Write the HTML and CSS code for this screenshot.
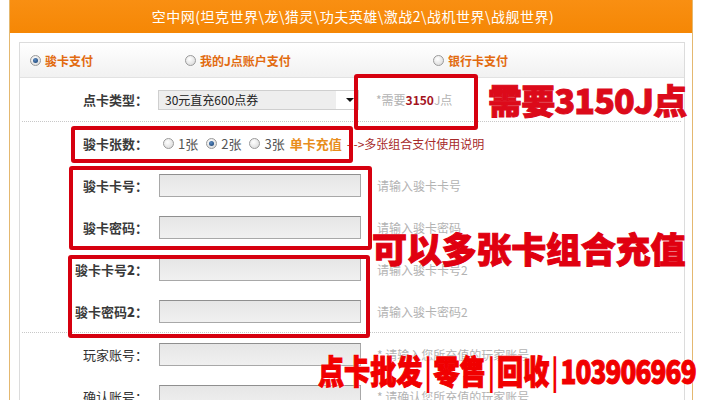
FILE: index.html
```html
<!DOCTYPE html>
<html lang="zh-CN">
<head>
<meta charset="utf-8">
<title>空中网充值</title>
<link rel="stylesheet" href="styles.css">
</head>
<body>
<div class="wrap">
  <div class="head">空中网(坦克世界\龙\猎灵\功夫英雄\激战2\战机世界\战舰世界)</div>
  <div class="main">
    <div class="panel">
      <div class="tabs">
        <div class="tab tab1"><span class="radio on"></span>骏卡支付</div>
        <div class="tab tab2"><span class="radio"></span>我的J点账户支付</div>
        <div class="tab tab3"><span class="radio"></span>银行卡支付</div>
      </div>
      <div class="row row-first sep">
        <div class="lbl">点卡类型：</div>
        <div class="select"><span class="sel-text">30元直充600点券</span><span class="sel-btn"><i class="arrow"></i></span></div>
        <div class="hint">*需要<b class="need">3150</b>J点</div>
      </div>
      <div class="row">
        <div class="lbl">骏卡张数：</div>
        <div class="counts">
          <span class="opt"><span class="radio"></span>1张</span>
          <span class="opt"><span class="radio on"></span>2张</span>
          <span class="opt"><span class="radio"></span>3张</span>
          <span class="single">单卡充值</span>
          <span class="help">- ->多张组合支付使用说明</span>
        </div>
      </div>
      <div class="row">
        <div class="lbl">骏卡卡号：</div>
        <div class="input"></div>
        <div class="hint">请输入骏卡卡号</div>
      </div>
      <div class="row">
        <div class="lbl">骏卡密码：</div>
        <div class="input"></div>
        <div class="hint">请输入骏卡密码</div>
      </div>
      <div class="row">
        <div class="lbl">骏卡卡号<b>2</b>：</div>
        <div class="input"></div>
        <div class="hint">请输入骏卡卡号2</div>
      </div>
      <div class="row sep">
        <div class="lbl">骏卡密码<b>2</b>：</div>
        <div class="input"></div>
        <div class="hint">请输入骏卡密码2</div>
      </div>
      <div class="row">
        <div class="lbl lbl-light">玩家账号：</div>
        <div class="input"></div>
        <div class="hint">* 请输入您所充值的玩家账号</div>
      </div>
      <div class="row">
        <div class="lbl lbl-light">确认账号：</div>
        <div class="input"></div>
        <div class="hint">* 请确认您所充值的玩家账号</div>
      </div>
    </div>
  </div>
</div>

<div class="mark mark1"></div>
<div class="mark mark2"></div>
<div class="mark mark3"></div>
<div class="mark mark4"></div>

<div class="big big1">需要3150J点</div>
<div class="big big2">可以多张卡组合充值</div>
<div class="big big3"><span class="squeeze">点卡批发<span class="bar">|</span>零售<span class="bar">|</span>回收<span class="bar">|</span><span class="num">103906969</span></span></div>
</body>
</html>
```

FILE: styles.css
```css
html, body {
  margin: 0;
  padding: 0;
  background: #fff;
}
body {
  position: relative;
  width: 705px;
  height: 400px;
  overflow: hidden;
  font-family: "Noto Sans CJK SC", "Noto Sans", sans-serif;
  font-size: 13px;
  color: #333;
}
.wrap {
  margin-left: 9px;
  width: 682px;
  border-left: 1px solid #e4b870;
  border-right: 1px solid #e4b870;
  height: 440px;
}
.head {
  height: 33px;
  line-height: 32px;
  background: linear-gradient(#f98f12, #f58705);
  color: #fff;
  text-align: center;
  font-size: 14px;
  letter-spacing: 0.5px;
  padding-left: 4px;
}
.main {
  padding: 9px 7px 0 9px;
}
.panel {
  border: 1px solid #dcdcdc;
  height: 420px;
}
.tabs {
  display: flex;
  align-items: center;
  height: 34px;
  padding-left: 10px;
  background: linear-gradient(#ffffff, #f1f1f1);
  border-bottom: 1px solid #e2e2e2;
}
.tab {
  display: flex;
  align-items: center;
  color: #e26b10;
  font-weight: bold;
  font-size: 12px;
}
.tab .radio {
  margin-right: 4px;
}
.tab1 { width: 155px; }
.tab2 { width: 248px; }
.radio {
  display: inline-block;
  box-sizing: border-box;
  width: 11px;
  height: 11px;
  border-radius: 50%;
  border: 1px solid #9a9a9a;
  background: radial-gradient(circle at 40% 35%, #ffffff, #d4d4d4);
  vertical-align: middle;
  position: relative;
}
.radio.on::after {
  content: "";
  position: absolute;
  left: 2px;
  top: 2px;
  width: 5px;
  height: 5px;
  border-radius: 50%;
  background: radial-gradient(circle at 40% 35%, #5c8bc2, #123a6a);
}
.row {
  display: flex;
  align-items: center;
  height: 42px;
  margin: 0 3px 0 2px;
}
.row-first {
  height: 43px;
}
.sep {
  border-bottom: 1px dotted #c8c8c8;
}
.lbl {
  width: 126px;
  text-align: right;
  margin-right: 11px;
  font-weight: bold;
  color: #3a3a3a;
  font-size: 13px;
  flex: none;
}
.lbl-light {
  font-weight: normal;
  color: #333;
}
.input {
  box-sizing: border-box;
  width: 202px;
  height: 23px;
  border: 1px solid #a8a8a8;
  border-top-color: #8f8f8f;
  background: linear-gradient(#e6e6e6, #f0f0f0);
  flex: none;
}
.hint {
  margin-left: 16px;
  color: #b3b3b3;
  font-size: 12px;
}
.need {
  color: #a4131e;
  font-weight: bold;
}
.select {
  box-sizing: border-box;
  display: flex;
  width: 201px;
  height: 20px;
  margin-left: -1px;
  margin-right: 1px;
  border: 1px solid #cfcfcf;
  background: #fff;
  flex: none;
}
.sel-text {
  flex: 1;
  background: #eeeeee;
  font-size: 12px;
  line-height: 17px;
  padding-left: 6px;
  color: #222;
}
.sel-btn {
  width: 22px;
  display: flex;
  align-items: center;
  justify-content: center;
}
.arrow {
  width: 0;
  height: 0;
  border-left: 4px solid transparent;
  border-right: 4px solid transparent;
  border-top: 4px solid #111;
  margin-left: 6px;
}
.counts {
  display: flex;
  align-items: center;
  font-size: 13px;
  color: #555;
  margin-left: 4px;
}
.opt {
  display: flex;
  align-items: center;
  margin-right: 8px;
}
.opt .radio {
  margin-right: 4px;
}
.single {
  color: #e88d1c;
  font-weight: bold;
  margin-left: -3px;
}
.help {
  color: #a72a2a;
  font-size: 12px;
  margin-left: 5px;
}

/* red annotation overlays */
.mark {
  position: absolute;
  box-sizing: border-box;
  border: 4px solid #d6000f;
  border-radius: 3px;
}
.mark1 { left: 354px; top: 74px; width: 124px; height: 56px; }
.mark2 { left: 71px; top: 126px; width: 282px; height: 37px; }
.mark3 { left: 69px; top: 166px; width: 303px; height: 84px; }
.mark4 { left: 68px; top: 255px; width: 302px; height: 83px; }

.big {
  position: absolute;
  font-weight: 900;
  line-height: 1;
  white-space: nowrap;
  color: #dc0a1a;
  -webkit-text-stroke: 1px currentColor;
}
.big1 {
  left: 488px;
  top: 83px;
  font-size: 34px;
  letter-spacing: -0.8px;
}
.big2 {
  left: 372px;
  top: 230px;
  font-size: 35px;
  letter-spacing: -0.2px;
  color: #e00010;
}
.big3 {
  left: 318px;
  top: 354px;
  font-size: 30px;
  color: #f10000;
  text-shadow: 0 0 2px #fff, 0 0 2px #fff;
}
.squeeze {
  display: inline-block;
  transform: scale(0.87, 1.08);
  transform-origin: left top;
}
.bar {
  display: inline-block;
  margin: 0 2px;
  font-weight: 700;
  -webkit-text-stroke: 0;
}
.num {
  display: inline-block;
  letter-spacing: -1px;
}
```
